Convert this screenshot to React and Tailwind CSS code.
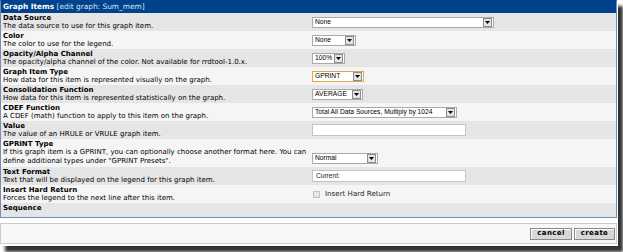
const verdana = { fontFamily: '"DejaVu Sans", Verdana, sans-serif' };
const arial = { fontFamily: '"Liberation Sans", Arial, sans-serif' };

function Arrow() {
    return (
        <span className="flex shrink-0 items-center justify-center w-[9px] h-[9px] border border-[#8c8c8c] bg-[#e4e4e4] mr-[1px]">
            <svg width="5" height="3" viewBox="0 0 5 3">
                <path d="M0 0 H5 L2.5 3 Z" fill="#000" />
            </svg>
        </span>
    );
}

function Select({ width, value, focus }) {
    return (
        <div
            className={`flex items-center justify-between h-[11px] bg-white border ${focus ? "border-[#e0a84e]" : "border-[#a9a9a9]"} ${width}`}
        >
            <span className="pl-[2px] text-[6.7px] leading-none text-black whitespace-nowrap" style={arial}>
                {value}
            </span>
            <Arrow />
        </div>
    );
}

function Input({ value }) {
    return (
        <div className="flex items-center w-[154px] h-[12px] bg-white border border-[#c4c4c4]">
            <span className="pl-[3px] text-[6.6px] leading-none text-[#222]" style={arial}>
                {value}
            </span>
        </div>
    );
}

const rows = [
    {
        title: "Data Source",
        desc: "The data source to use for this graph item.",
        control: <Select width="w-[182px]" value="None" />,
    },
    {
        title: "Color",
        desc: "The color to use for the legend.",
        control: <Select width="w-[44px]" value="None" />,
    },
    {
        title: "Opacity/Alpha Channel",
        desc: "The opacity/alpha channel of the color. Not available for rrdtool-1.0.x.",
        control: <Select width="w-[33px]" value="100%" />,
    },
    {
        title: "Graph Item Type",
        desc: "How data for this item is represented visually on the graph.",
        control: <Select width="w-[52px]" value="GPRINT" focus />,
    },
    {
        title: "Consolidation Function",
        desc: "How data for this item is represented statistically on the graph.",
        control: <Select width="w-[51px]" value="AVERAGE" />,
    },
    {
        title: "CDEF Function",
        desc: "A CDEF (math) function to apply to this item on the graph.",
        control: <Select width="w-[145px]" value="Total All Data Sources, Multiply by 1024" />,
    },
    {
        title: "Value",
        desc: "The value of an HRULE or VRULE graph item.",
        control: <Input value="" />,
    },
    {
        title: "GPRINT Type",
        desc: (
            <>
                If this graph item is a GPRINT, you can optionally choose another format here. You can
                <br />
                define additional types under "GPRINT Presets".
            </>
        ),
        control: <Select width="w-[66px]" value="Normal" />,
        tall: true,
    },
    {
        title: "Text Format",
        desc: "Text that will be displayed on the legend for this graph item.",
        control: <Input value="Current:" />,
    },
    {
        title: "Insert Hard Return",
        desc: "Forces the legend to the next line after this item.",
        control: (
            <div className="flex items-center gap-[5px]">
                <span className="w-[7px] h-[7px] ml-[1px] border border-[#c2c2c2] bg-[#e6e6e6]" />
                <span className="text-[7.1px] leading-none text-[#222]" style={verdana}>
                    Insert Hard Return
                </span>
            </div>
        ),
    },
];

export default function App() {
    return (
        <div className="w-[623px] h-[252px] bg-white overflow-hidden">
            <div className="w-[618px] h-[246px] bg-white shadow-[5px_6px_3px_#333]" style={verdana}>
                {/* Graph items table */}
                <div className="w-[617px] border border-[#6f8fba] border-t-[#00438c]">
                    <div className="h-[12px] bg-[#00438c] pl-[2px] flex items-center text-[7.4px] leading-none whitespace-nowrap">
                        <span className="font-bold text-white">Graph Items</span>
                        <span className="text-[#dbe4ef]">&nbsp;[edit graph: Sum_mem]</span>
                    </div>

                    {rows.map((row, i) => (
                        <div
                            key={row.title}
                            className={`flex ${row.tall ? "h-[28px]" : "h-[18px]"} ${i % 2 === 0 ? "bg-[#e5e5e5]" : "bg-[#f5f5f5]"}`}
                        >
                            <div className="w-[311px] pl-[2px] pt-[1px] text-[7px] leading-[8.4px] text-black whitespace-nowrap overflow-hidden">
                                <div className="font-bold">{row.title}</div>
                                <div>{row.desc}</div>
                            </div>
                            <div className={`flex ${row.tall ? "items-end pb-[3px]" : "items-center"}`}>{row.control}</div>
                        </div>
                    ))}

                    <div className="h-[14px] bg-[#e5e5e5] pl-[2px] pt-[1px] text-[7px] leading-[8.4px] font-bold text-black">
                        Sequence
                    </div>
                </div>

                {/* Save bar */}
                <div className="mt-[5px] w-[617px] h-[21px] border border-[#cbcbcb] bg-[#f7f7f7] flex items-center justify-end gap-[2px] pr-[1px]">
                    <button className="w-[42px] h-[12px] border border-[#8a8a8a] bg-[#d8d8d8] shadow-[inset_1px_1px_0_#fff] text-[7px] leading-none font-bold tracking-[0.4px] text-black">
                        cancel
                    </button>
                    <button className="w-[41px] h-[12px] border border-[#8a8a8a] bg-[#d8d8d8] shadow-[inset_1px_1px_0_#fff] text-[7px] leading-none font-bold tracking-[0.4px] text-black">
                        create
                    </button>
                </div>
            </div>
        </div>
    );
}
